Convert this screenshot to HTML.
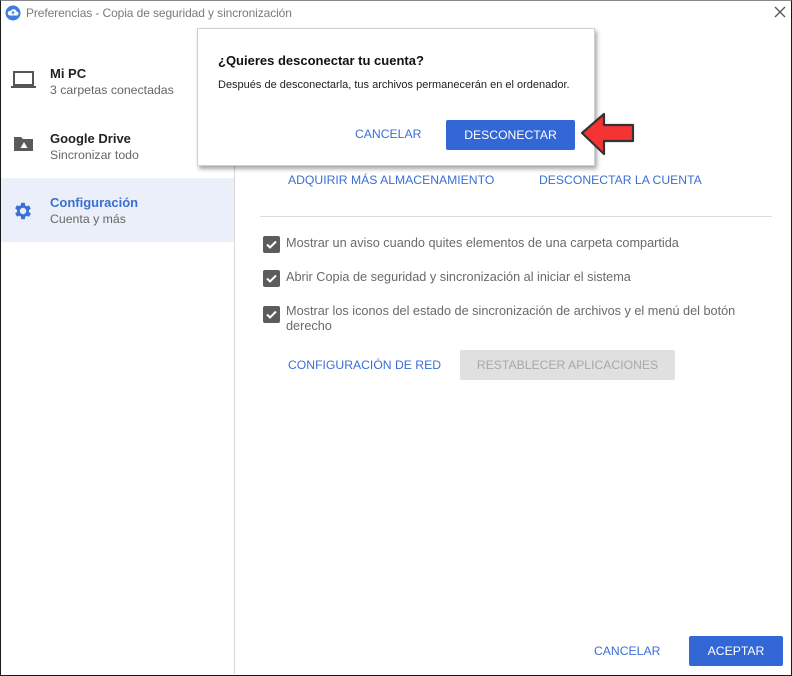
<!DOCTYPE html>
<html><head><meta charset="utf-8">
<style>
*{margin:0;padding:0;box-sizing:border-box}
body{width:792px;height:676px;overflow:hidden;background:#fff;font-family:"Liberation Sans",Arial,sans-serif;position:relative}
.win{position:absolute;left:0;top:0;width:792px;height:676px;border:1px solid #1a1a1a;border-top-color:#888}
.abs{position:absolute}
.title{left:26px;top:6px;font-size:12px;color:#7a7a7a;letter-spacing:-0.1px}
.side{left:1px;top:28px;width:234px;height:646px;border-right:1px solid #d6d6d6}
.item{position:absolute;left:0;width:233px;height:64px}
.h{position:absolute;left:49px;font-size:13px;font-weight:bold;color:#222}
.s{position:absolute;left:49px;font-size:12.3px;color:#666}
.link{color:#3b6fd4;font-size:12.2px}
.cb{position:absolute;left:263px;width:17px;height:17px;background:#5c5c5c;border-radius:2px}
.ct{position:absolute;left:286px;font-size:12.7px;color:#6a6a6a}
</style></head><body>
<div class="win"></div>
<svg class="abs" style="left:5px;top:5px" width="16" height="16" viewBox="0 0 16 16"><circle cx="8" cy="8" r="7.5" fill="#3f7de0"/><path d="M4.5 10.5h7a2 2 0 0 0 0-4 3 3 0 0 0-5.6-.6A2.3 2.3 0 0 0 4.5 10.5z" fill="#fff"/><path d="M8 6.5v3M6.7 8l1.3-1.4L9.3 8" stroke="#3f7de0" fill="none" stroke-width="1"/></svg>
<div class="abs title">Preferencias - Copia de seguridad y sincronización</div>
<svg class="abs" style="left:774px;top:6px" width="12" height="12"><path d="M1 1l10 10M11 1L1 11" stroke="#555" stroke-width="1.3"/></svg>
<div class="abs side">
 <div class="item" style="top:30px">
  <svg class="abs" style="left:10px;top:12px" width="26" height="20" viewBox="0 0 26 20"><rect x="3" y="2" width="19" height="13" fill="none" stroke="#555" stroke-width="2"/><rect x="0" y="16" width="25" height="2" fill="#555"/></svg>
  <div class="h" style="top:8px">Mi PC</div><div class="s" style="top:25px">3 carpetas conectadas</div></div>
 <div class="item" style="top:95px">
  <svg class="abs" style="left:12px;top:12px" width="22" height="18" viewBox="0 0 22 18"><path d="M1 2h7l2 2h10v12H1z" fill="#5a5a5a"/><path d="M11 7l3.5 6h-7z" fill="#fff"/></svg>
  <div class="h" style="top:8px">Google Drive</div><div class="s" style="top:25px">Sincronizar todo</div></div>
 <div class="item" style="top:150px;background:#ebeff9;height:64px">
  <svg class="abs" style="left:11px;top:22px" width="22" height="22" viewBox="0 0 24 24"><path fill="#3a71d6" d="M19.4 13a7.5 7.5 0 0 0 0-2l2.1-1.6-2-3.5-2.5 1a7.3 7.3 0 0 0-1.7-1L15 3h-4l-.4 2.7a7.3 7.3 0 0 0-1.7 1l-2.5-1-2 3.5L6.6 11a7.5 7.5 0 0 0 0 2l-2.1 1.6 2 3.5 2.5-1a7.3 7.3 0 0 0 1.700 1L11 21h4l.4-2.7a7.3 7.3 0 0 0 1.7-1l2.5 1 2-3.5zM13 15.5a3.5 3.5 0 1 1 0-7 3.5 3.5 0 0 1 0 7z" transform="translate(-1 0)"/></svg>
  <div class="h" style="top:17px;color:#3a6fd0">Configuración</div><div class="s" style="top:34px">Cuenta y más</div></div>
</div>
<div class="abs link" style="left:288px;top:173px">ADQUIRIR MÁS ALMACENAMIENTO</div>
<div class="abs link" style="left:539px;top:173px">DESCONECTAR LA CUENTA</div>
<div class="abs" style="left:260px;top:216px;width:512px;height:1px;background:#dcdcdc"></div>
<div class="cb" style="top:236px"><svg width="17" height="17"><path d="M4 8.5l3 3 6-6" stroke="#fff" stroke-width="2" fill="none"/></svg></div>
<div class="ct" style="top:236px">Mostrar un aviso cuando quites elementos de una carpeta compartida</div>
<div class="cb" style="top:270px"><svg width="17" height="17"><path d="M4 8.5l3 3 6-6" stroke="#fff" stroke-width="2" fill="none"/></svg></div>
<div class="ct" style="top:270px">Abrir Copia de seguridad y sincronización al iniciar el sistema</div>
<div class="cb" style="top:306px"><svg width="17" height="17"><path d="M4 8.5l3 3 6-6" stroke="#fff" stroke-width="2" fill="none"/></svg></div>
<div class="ct" style="top:304px;height:26px;overflow:hidden;line-height:15px">Mostrar los iconos del estado de sincronización de archivos y el menú del botón<br>derecho</div>
<div class="abs link" style="left:288px;top:358px">CONFIGURACIÓN DE RED</div>
<div class="abs" style="left:460px;top:350px;width:215px;height:30px;background:#e0e0e0;border-radius:2px;color:#a8a8a8;font-size:12.2px;text-align:center;line-height:30px">RESTABLECER APLICACIONES</div>
<div class="abs link" style="left:594px;top:644px">CANCELAR</div>
<div class="abs" style="left:689px;top:636px;width:94px;height:30px;background:#3367d6;border-radius:2px;color:#fff;font-size:12.2px;text-align:center;line-height:30px">ACEPTAR</div>
<div class="abs" style="left:197px;top:28px;width:398px;height:138px;background:#fff;border:1px solid #d0d0d0;box-shadow:2px 3px 4px rgba(0,0,0,.35)">
 <div class="abs" style="left:20px;top:24px;font-size:13px;font-weight:bold;color:#111">¿Quieres desconectar tu cuenta?</div>
 <div class="abs" style="left:20px;top:50px;font-size:11px;color:#222">Después de desconectarla, tus archivos permanecerán en el ordenador.</div>
 <div class="abs link" style="left:157px;top:98px">CANCELAR</div>
 <div class="abs" style="left:248px;top:91px;width:129px;height:30px;background:#3367d6;border-radius:2px;color:#fff;font-size:12.2px;text-align:center;line-height:30px">DESCONECTAR</div>
</div>
<svg class="abs" style="left:578px;top:110px" width="62" height="48" viewBox="0 0 62 48"><path d="M4 23L26 4v11h29v16H26v13z" fill="#f53333" stroke="#333" stroke-width="2.2" stroke-linejoin="round"/></svg>
</body></html>
